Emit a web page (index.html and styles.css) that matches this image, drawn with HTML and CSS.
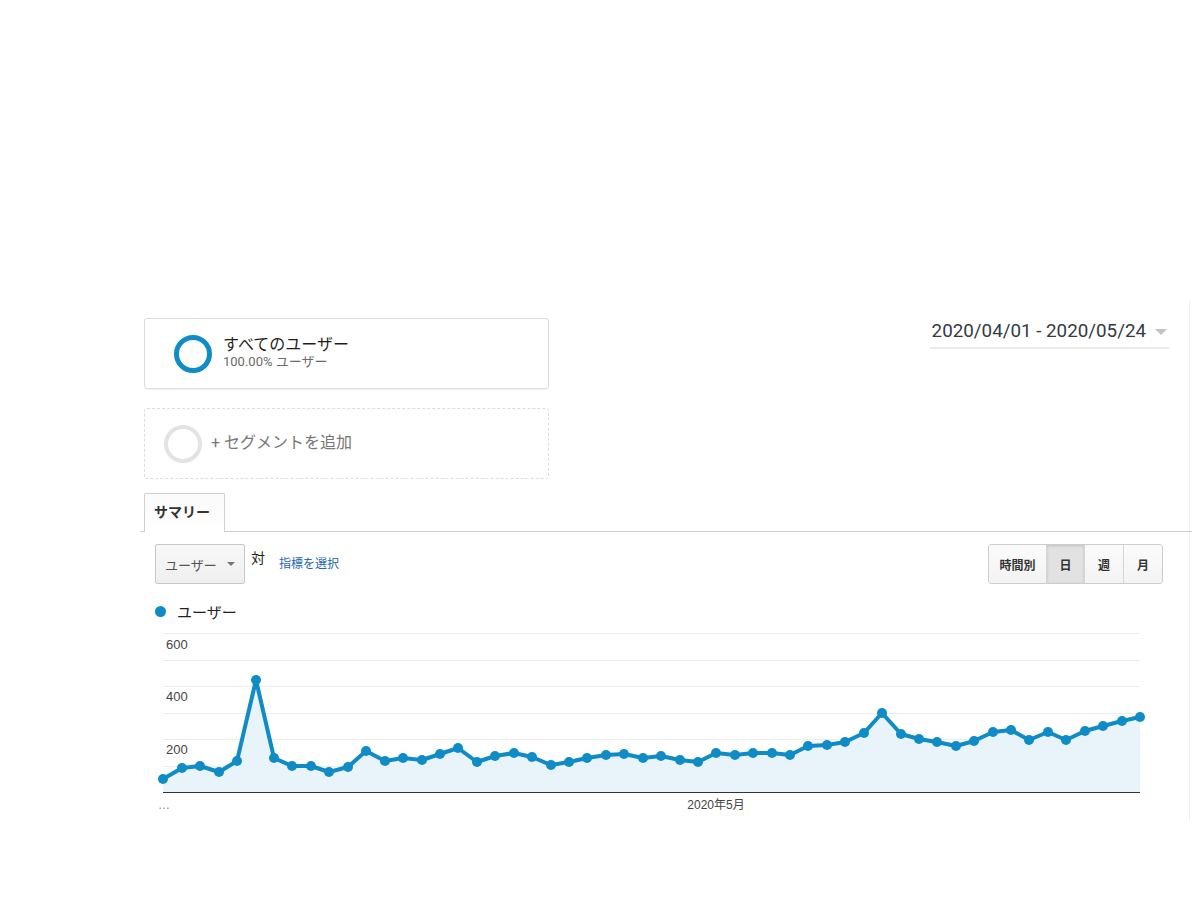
FILE: index.html
```html
<!DOCTYPE html>
<html lang="ja">
<head>
<meta charset="utf-8">
<link rel="stylesheet" href="styles.css">
</head>
<body>
<div class="page">
  <div class="top">
    <div class="segments">
      <div class="seg seg-active">
        <span class="ring ring-blue"></span>
        <div class="seg-text">
          <div class="seg-title">すべてのユーザー</div>
          <div class="seg-sub">100.00% ユーザー</div>
        </div>
      </div>
      <div class="seg seg-add">
        <span class="ring ring-gray"></span>
        <div class="seg-add-label">+ セグメントを追加</div>
      </div>
    </div>
    <div class="daterange"><span>2020/04/01 - 2020/05/24</span><span class="caret"></span></div>
  </div>
  <div class="tabs"><div class="tab">サマリー</div></div>
  <div class="controls">
    <div class="ctl-left">
      <div class="select"><span>ユーザー</span><span class="caret-sm"></span></div>
      <span class="vs">対</span>
      <a class="pick">指標を選択</a>
    </div>
    <div class="btngroup">
      <button class="btn btn-wide">時間別</button><button class="btn active">日</button><button class="btn">週</button><button class="btn">月</button>
    </div>
  </div>
  <div class="legend"><span class="dot"></span><span>ユーザー</span></div>
  <svg class="chart" width="1049" height="200" viewBox="140 620 1049 200">
    <g class="grid">
      <line x1="163" y1="632.5" x2="1140" y2="632.5"/>
      <line x1="163" y1="659.5" x2="1140" y2="659.5"/>
      <line x1="163" y1="685.5" x2="1140" y2="685.5"/>
      <line x1="163" y1="712.5" x2="1140" y2="712.5"/>
      <line x1="163" y1="738.5" x2="1140" y2="738.5"/>
      <line x1="163" y1="765.5" x2="1140" y2="765.5"/>
    </g>
    <polygon class="area" points="163,791 163,778 182,767 200,765 219,771 237,760 256,679 274,757 292,765 311,765 329,771 348,766 366,750 385,760 403,757 422,759 440,753 458,747 477,761 495,755 514,752 532,756 551,764 569,761 587,757 606,754 624,753 643,757 661,755 680,759 698,761 716,752 735,754 753,752 772,752 790,754 808,745 827,744 845,741 864,732 882,712 901,733 919,738 937,741 956,745 974,740 993,731 1011,729 1029,739 1048,731 1066,739 1085,730 1103,725 1122,720 1140,716 1140,791"/>
    <line class="axis" x1="163" y1="791.5" x2="1140" y2="791.5"/>
    <text class="ylab" x="166" y="648">600</text>
    <text class="ylab" x="166" y="700">400</text>
    <text class="ylab" x="166" y="753">200</text>
    <polyline class="line" points="163,778 182,767 200,765 219,771 237,760 256,679 274,757 292,765 311,765 329,771 348,766 366,750 385,760 403,757 422,759 440,753 458,747 477,761 495,755 514,752 532,756 551,764 569,761 587,757 606,754 624,753 643,757 661,755 680,759 698,761 716,752 735,754 753,752 772,752 790,754 808,745 827,744 845,741 864,732 882,712 901,733 919,738 937,741 956,745 974,740 993,731 1011,729 1029,739 1048,731 1066,739 1085,730 1103,725 1122,720 1140,716"/>
    <g class="pts">
      <circle cx="163" cy="778" r="5"/><circle cx="182" cy="767" r="5"/><circle cx="200" cy="765" r="5"/><circle cx="219" cy="771" r="5"/><circle cx="237" cy="760" r="5"/><circle cx="256" cy="679" r="5"/><circle cx="274" cy="757" r="5"/><circle cx="292" cy="765" r="5"/><circle cx="311" cy="765" r="5"/><circle cx="329" cy="771" r="5"/><circle cx="348" cy="766" r="5"/><circle cx="366" cy="750" r="5"/><circle cx="385" cy="760" r="5"/><circle cx="403" cy="757" r="5"/><circle cx="422" cy="759" r="5"/><circle cx="440" cy="753" r="5"/><circle cx="458" cy="747" r="5"/><circle cx="477" cy="761" r="5"/><circle cx="495" cy="755" r="5"/><circle cx="514" cy="752" r="5"/><circle cx="532" cy="756" r="5"/><circle cx="551" cy="764" r="5"/><circle cx="569" cy="761" r="5"/><circle cx="587" cy="757" r="5"/><circle cx="606" cy="754" r="5"/><circle cx="624" cy="753" r="5"/><circle cx="643" cy="757" r="5"/><circle cx="661" cy="755" r="5"/><circle cx="680" cy="759" r="5"/><circle cx="698" cy="761" r="5"/><circle cx="716" cy="752" r="5"/><circle cx="735" cy="754" r="5"/><circle cx="753" cy="752" r="5"/><circle cx="772" cy="752" r="5"/><circle cx="790" cy="754" r="5"/><circle cx="808" cy="745" r="5"/><circle cx="827" cy="744" r="5"/><circle cx="845" cy="741" r="5"/><circle cx="864" cy="732" r="5"/><circle cx="882" cy="712" r="5"/><circle cx="901" cy="733" r="5"/><circle cx="919" cy="738" r="5"/><circle cx="937" cy="741" r="5"/><circle cx="956" cy="745" r="5"/><circle cx="974" cy="740" r="5"/><circle cx="993" cy="731" r="5"/><circle cx="1011" cy="729" r="5"/><circle cx="1029" cy="739" r="5"/><circle cx="1048" cy="731" r="5"/><circle cx="1066" cy="739" r="5"/><circle cx="1085" cy="730" r="5"/><circle cx="1103" cy="725" r="5"/><circle cx="1122" cy="720" r="5"/><circle cx="1140" cy="716" r="5"/>
    </g>
    <text class="xlab dim" x="158" y="808">…</text>
    <text class="xlab" x="716" y="808" text-anchor="middle">2020年5月</text>
  </svg>
</div>
</body>
</html>
```

FILE: styles.css
```css
html, body {
  margin: 0;
  padding: 0;
  background: #fff;
}
body {
  font-family: "Roboto", "Noto Sans CJK JP", sans-serif;
  color: #222;
  padding-top: 300px;
}
.page {
  margin-left: 140px;
  width: 1049px;
  border-right: 1px solid #f1f1f1;
  padding-top: 18px;
  box-sizing: content-box;
}
.top {
  display: flex;
  justify-content: space-between;
  align-items: flex-start;
}
.segments {
  margin-left: 4px;
  width: 405px;
  display: flex;
  flex-direction: column;
  gap: 19px;
}
.seg {
  height: 71px;
  box-sizing: border-box;
  border-radius: 3px;
  display: flex;
  align-items: center;
}
.seg-active {
  border: 1px solid #dcdcdc;
  padding-left: 29px;
  gap: 11px;
  box-shadow: 0 1px 1px rgba(0,0,0,0.04);
}
.seg-add {
  border: 1px dashed #dcdcdc;
  padding-left: 19px;
  gap: 9px;
}
.ring {
  display: block;
  width: 38px;
  height: 38px;
  box-sizing: border-box;
  border-radius: 50%;
  flex: none;
}
.ring-blue {
  border: 5px solid #0f8bc6;
}
.ring-gray {
  border: 4px solid #e3e3e3;
}
.seg-text {
  display: flex;
  flex-direction: column;
  margin-top: -2px;
}
.seg-title {
  font-size: 16px;
  line-height: 19px;
  color: #1f1f1f;
}
.seg-sub {
  font-size: 13px;
  line-height: 16px;
  color: #6b6b6b;
}
.seg-add-label {
  font-size: 16px;
  color: #777;
  margin-top: -6px;
}
.daterange {
  margin-right: 20px;
  display: flex;
  align-items: center;
  gap: 9px;
  font-family: "Roboto", sans-serif;
  font-size: 18.8px;
  line-height: 26px;
  color: #333a44;
  padding: 0 2px 3px 2px;
  border-bottom: 2px solid #eaeaea;
}
.caret {
  width: 0;
  height: 0;
  border-left: 6px solid transparent;
  border-right: 6px solid transparent;
  border-top: 6px solid #c4c4c4;
  margin-top: 2px;
}
.tabs {
  margin-top: 14px;
  padding-left: 4px;
  border-bottom: 1px solid #cfcfcf;
  width: 1048px;
  display: flex;
}
.tab {
  width: 81px;
  height: 39px;
  box-sizing: border-box;
  border: 1px solid #d0d0d0;
  border-bottom: none;
  border-radius: 2px 2px 0 0;
  background: linear-gradient(#fafafa, #fff);
  font-family: "Liberation Sans", "Noto Sans CJK JP", sans-serif;
  font-weight: bold;
  font-size: 14px;
  color: #333;
  padding-left: 9px;
  line-height: 37px;
  margin-bottom: -1px;
}
.controls {
  margin-top: 12px;
  padding-left: 15px;
  padding-right: 26px;
  display: flex;
  justify-content: space-between;
  align-items: flex-start;
  font-family: "Liberation Sans", "Noto Sans CJK JP", sans-serif;
}
.ctl-left {
  display: flex;
  align-items: flex-start;
}
.select {
  width: 90px;
  height: 40px;
  box-sizing: border-box;
  border: 1px solid #c8c8c8;
  border-radius: 2px;
  background: linear-gradient(#f8f8f8, #efefef);
  display: flex;
  align-items: center;
  justify-content: space-between;
  padding: 0 9px 0 9px;
  font-size: 13px;
  color: #555;
}
.caret-sm {
  width: 0;
  height: 0;
  border-left: 4px solid transparent;
  border-right: 4px solid transparent;
  border-top: 4px solid #777;
}
.vs {
  margin-left: 6px;
  font-size: 14px;
  line-height: 28px;
  color: #222;
}
.pick {
  margin-left: 14px;
  font-size: 12px;
  line-height: 40px;
  color: #2465b0;
}
.btngroup {
  display: flex;
  border: 1px solid #cdcdcd;
  border-radius: 3px;
  overflow: hidden;
}
.btn {
  width: 39px;
  height: 38px;
  border: none;
  border-left: 1px solid #d6d6d6;
  background: linear-gradient(#fbfbfb, #f3f3f3);
  font-family: "Liberation Sans", "Noto Sans CJK JP", sans-serif;
  font-weight: bold;
  font-size: 12px;
  color: #333;
  padding: 0;
}
.btn-wide {
  width: 57px;
  border-left: none;
}
.btn.active {
  width: 38px;
  background: #e2e2e2;
  box-shadow: inset 0 1px 3px rgba(0,0,0,0.15);
}
.legend {
  margin-top: 18px;
  padding-left: 15px;
  height: 18px;
  display: flex;
  align-items: center;
  gap: 11px;
  font-family: "Liberation Sans", "Noto Sans CJK JP", sans-serif;
  font-size: 15px;
  color: #222;
}
.dot {
  width: 11px;
  height: 11px;
  border-radius: 50%;
  background: #0f8bc6;
}
.chart {
  display: block;
  margin-top: 1px;
}
.grid line {
  stroke: #ececec;
  stroke-width: 1;
}
.axis {
  stroke: #333;
  stroke-width: 1;
}
.area {
  fill: #e8f3fa;
}
.line {
  fill: none;
  stroke: #0f8bc6;
  stroke-width: 4;
  stroke-linejoin: round;
}
.pts circle {
  fill: #0f8bc6;
}
.ylab {
  font-family: "Liberation Sans", sans-serif;
  font-size: 13px;
  fill: #444;
}
.xlab {
  font-family: "Liberation Sans", "Noto Sans CJK JP", sans-serif;
  font-size: 12px;
  fill: #444;
}
.xlab.dim {
  fill: #888;
}
```
